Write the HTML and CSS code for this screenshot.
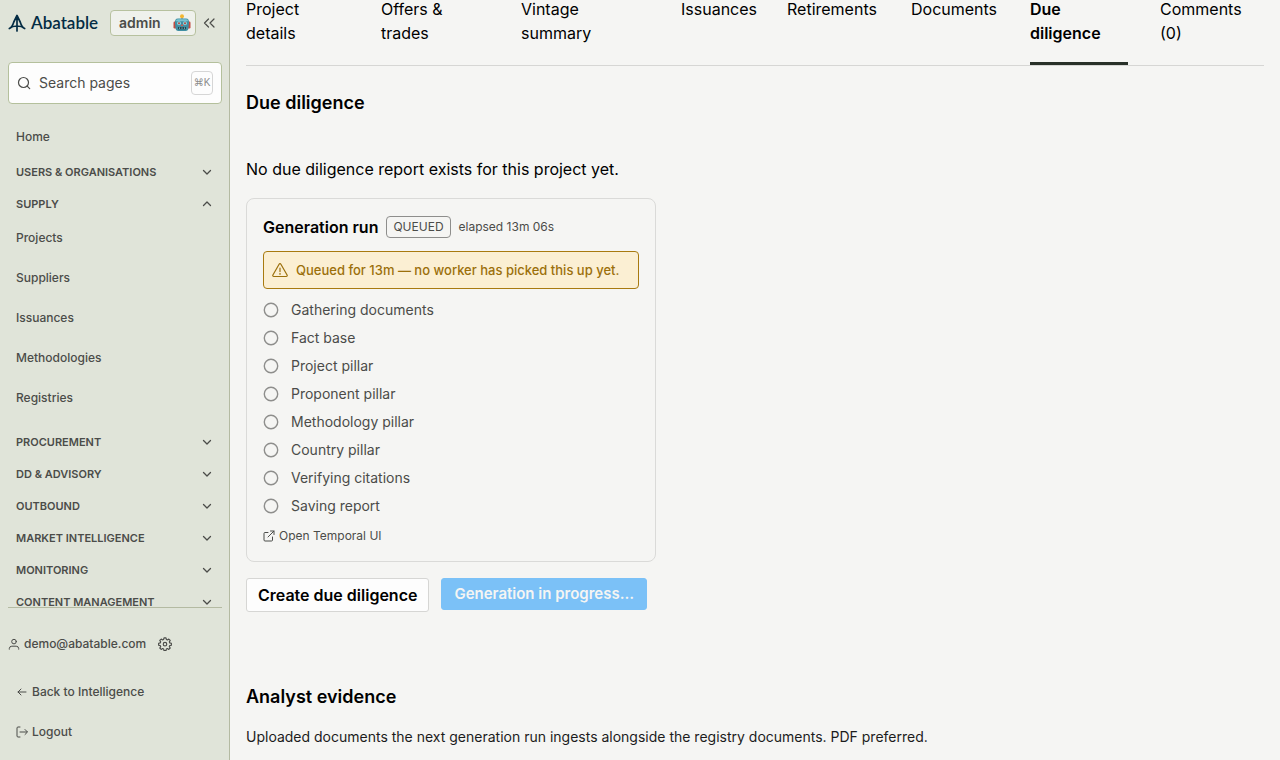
FILE: index.html
```html
<!DOCTYPE html>
<html lang="en">
<head>
    <meta charset="UTF-8">
    <meta name="viewport" content="width=device-width, initial-scale=1.0">
    <title>Due diligence - Abatable admin</title>
    <link rel="stylesheet" href="styles.css">
</head>
<body>
    <!-- icons shared by several rows -->
    <svg class="sprite" aria-hidden="true">
        <symbol id="chevron" viewBox="0 0 12 12"><path d="M2.500 4.500L6 8l3.500-3.500"/></symbol>
        <symbol id="circle" viewBox="0 0 16 16"><circle cx="8" cy="8" r="6.700"/></symbol>
    </svg>

    <aside class="sidebar">
        <div class="brand">
            <svg class="logo-mark" viewBox="0 0 18 18"><path d="M9 1.500V17M1.300 14.500C4 13.500 5.200 10 5.800 8L9 1.500L12.200 8C12.800 10 14 13.500 16.700 14.500M1.500 14.300C5 11.200 13 11.200 16.500 14.300"/></svg>
            <span class="logo-text">Abatable</span>
            <span class="role">admin
                <svg class="robot" viewBox="0 0 18 18"><path fill="#8b9aa0" d="M8.300 2.500h1.400V6H8.300z"/><circle cx="9" cy="2.200" r="2" fill="#f2b632"/><rect x="0.500" y="7.500" width="3" height="7" rx="1.200" fill="#c24a40"/><rect x="14.500" y="7.500" width="3" height="7" rx="1.200" fill="#c24a40"/><path fill="#3f8fa3" d="M5 4.500h8c2.500 0 3.200 2 3 4.500l-.5 5c-.2 2-1 3-3 3h-7c-2 0-2.800-1-3-3L2 9c-.2-2.500.5-4.500 3-4.500z"/><path fill="#79c3d1" d="M5 5.200h8c1.500 0 2 .8 2 2H3c0-1.200.5-2 2-2z"/><circle cx="6" cy="9.300" r="2" fill="#8fd0da"/><circle cx="12" cy="9.300" r="2" fill="#8fd0da"/><circle cx="6" cy="9.300" r="1" fill="#b8483f"/><circle cx="12" cy="9.300" r="1" fill="#b8483f"/><path fill="#e0584a" d="M9 10l1.200 2H7.800z"/><path fill="#24444e" d="M5 13h8v2.300H5z"/><path fill="#79c3d1" d="M6 13.500h1v1.300H6zM8.500 13.500h1v1.300h-1zM11 13.500h1v1.300h-1z"/></svg>
            </span>
            <button class="collapse" type="button" aria-label="Collapse sidebar">
                <svg class="icon" viewBox="0 0 14 14"><path d="M6.500 3L2.500 7l4 4M12 3L8 7l4 4"/></svg>
            </button>
        </div>

        <label class="search">
            <svg class="icon" viewBox="0 0 14 14"><circle cx="6.500" cy="6.500" r="5"/><path d="M10.200 10.200l2.500 2.500"/></svg>
            <input type="text" placeholder="Search pages" aria-label="Search pages">
            <kbd>⌘K</kbd>
        </label>

        <nav class="menu">
            <a class="item home" href="#">Home</a>
            <button class="group" type="button">Users &amp; Organisations <svg class="chev"><use href="#chevron"/></svg></button>
            <button class="group open" type="button">Supply <svg class="chev"><use href="#chevron"/></svg></button>
            <div class="items">
                <a class="item" href="#">Projects</a>
                <a class="item" href="#">Suppliers</a>
                <a class="item" href="#">Issuances</a>
                <a class="item" href="#">Methodologies</a>
                <a class="item" href="#">Registries</a>
            </div>
            <button class="group" type="button">Procurement <svg class="chev"><use href="#chevron"/></svg></button>
            <button class="group" type="button">DD &amp; Advisory <svg class="chev"><use href="#chevron"/></svg></button>
            <button class="group" type="button">Outbound <svg class="chev"><use href="#chevron"/></svg></button>
            <button class="group" type="button">Market Intelligence <svg class="chev"><use href="#chevron"/></svg></button>
            <button class="group" type="button">Monitoring <svg class="chev"><use href="#chevron"/></svg></button>
            <button class="group" type="button">Content Management <svg class="chev"><use href="#chevron"/></svg></button>
        </nav>

        <div class="account">
            <div class="user">
                <svg class="icon small" viewBox="0 0 12 12"><circle cx="6" cy="3.600" r="2.300"/><path d="M1.300 11.200V10.500a2.500 2.500 0 0 1 2.500-2.300h4.400a2.500 2.500 0 0 1 2.500 2.300v.7"/></svg>
                <span>demo@abatable.com</span>
                <button class="settings" type="button" aria-label="Settings">
                    <svg class="icon" viewBox="0 0 24 24"><path stroke-width="2" d="M10.300 1.500h3.400l.6 2.700 1.800.8 2.400-1.500 2.400 2.400-1.500 2.400.8 1.800 2.700.6v3.400l-2.700.6-.8 1.800 1.500 2.400-2.400 2.400-2.400-1.500-1.800.8-.6 2.700h-3.400l-.6-2.700-1.800-.8-2.400 1.500-2.400-2.400 1.500-2.400-.8-1.800-2.700-.6v-3.400l2.700-.6.800-1.800-1.500-2.400 2.400-2.400 2.400 1.500 1.800-.8z"/><circle cx="12" cy="12.300" r="3" stroke-width="2"/></svg>
                </button>
            </div>
            <a class="foot-link" href="#"><svg class="icon small" viewBox="0 0 12 12"><path d="M10 6H2M5 3L2 6l3 3"/></svg>Back to Intelligence</a>
            <a class="foot-link" href="#"><svg class="icon small" viewBox="0 0 12 12"><path d="M4 1H2a1 1 0 0 0-1 1v8a1 1 0 0 0 1 1h2M4 6h7M9 3.500L11.500 6 9 8.500"/></svg>Logout</a>
        </div>
    </aside>

    <main>
        <nav class="tabs">
            <a href="#">Project<br>details</a>
            <a href="#">Offers &amp;<br>trades</a>
            <a href="#">Vintage<br>summary</a>
            <a href="#">Issuances</a>
            <a href="#">Retirements</a>
            <a href="#">Documents</a>
            <a class="active" href="#">Due<br>diligence</a>
            <a href="#">Comments<br>(0)</a>
        </nav>

        <h2>Due diligence</h2>
        <p class="empty">No due diligence report exists for this project yet.</p>

        <section class="run">
            <div class="run-head">
                <h3>Generation run</h3>
                <span class="status">QUEUED</span>
                <span class="elapsed">elapsed 13m 06s</span>
            </div>
            <div class="warning">
                <svg class="icon" viewBox="0 0 16 16"><path d="M8 1.700a1 1 0 0 1 .9.500l6.200 10.800a1 1 0 0 1-.9 1.500H1.800a1 1 0 0 1-.9-1.500L7.100 2.200a1 1 0 0 1 .9-.5zM8 6v3.500M8 11.300v1"/></svg>
                Queued for 13m — no worker has picked this up yet.
            </div>
            <ul class="steps">
                <li><svg><use href="#circle"/></svg>Gathering documents</li>
                <li><svg><use href="#circle"/></svg>Fact base</li>
                <li><svg><use href="#circle"/></svg>Project pillar</li>
                <li><svg><use href="#circle"/></svg>Proponent pillar</li>
                <li><svg><use href="#circle"/></svg>Methodology pillar</li>
                <li><svg><use href="#circle"/></svg>Country pillar</li>
                <li><svg><use href="#circle"/></svg>Verifying citations</li>
                <li><svg><use href="#circle"/></svg>Saving report</li>
            </ul>
            <a class="temporal" href="#"><svg class="icon small" viewBox="0 0 12 12"><path d="M5 2.500H2a1 1 0 0 0-1 1V10a1 1 0 0 0 1 1h6.500a1 1 0 0 0 1-1V7M7.500 1H11v3.500M11 1L5 7"/></svg>Open Temporal UI</a>
        </section>

        <div class="actions">
            <button class="btn" type="button">Create due diligence</button>
            <button class="btn primary" type="button" disabled>Generation in progress…</button>
        </div>

        <h2>Analyst evidence</h2>
        <p class="hint">Uploaded documents the next generation run ingests alongside the registry documents. PDF preferred.</p>
    </main>
</body>
</html>
```
FILE: styles.css
```css
* {
    box-sizing: border-box;
}

body {
    display: flex;
    height: 100vh;
    margin: 0;
    background: #f5f5f3;
    color: #000;
    font-family: Inter, "Liberation Sans", sans-serif;
    font-size: 16px;
    line-height: 24px;
}

a {
    color: inherit;
    text-decoration: none;
}

button, input {
    font: inherit;
    color: inherit;
}

svg {
    flex: none;
    fill: none;
    stroke: currentColor;
    stroke-linecap: round;
    stroke-linejoin: round;
}

.sprite {
    position: absolute;
    width: 0;
    height: 0;
}

.icon {
    width: 14px;
    height: 14px;
    stroke-width: 1.2;
}

.icon.small {
    width: 12px;
    height: 12px;
    stroke-width: 1;
}

/* sidebar */
.sidebar {
    display: flex;
    flex: none;
    flex-direction: column;
    width: 230px;
    padding: 10px 7px 16px 8px;
    background: #e0e4d9;
    border-right: 1px solid #b4baa2;
    color: #4b4c49;
}

.brand {
    display: flex;
    align-items: center;
    height: 26px;
}

.logo-mark {
    width: 18px;
    height: 18px;
    stroke: #042c44;
    stroke-width: 1.7;
}

.logo-text {
    width: 80px;
    padding-left: 5px;
    color: #042c44;
    font-family: Lato, sans-serif;
    font-size: 17px;
    font-weight: 600;
}

.role {
    display: flex;
    align-items: center;
    justify-content: space-between;
    width: 86px;
    height: 26px;
    margin-left: 4px;
    padding: 0 4px 0 8px;
    background: #eff1ec;
    border: 1px solid #b7c19f;
    border-radius: 4px;
    font-size: 14px;
    font-weight: 600;
}

.robot {
    width: 18px;
    height: 18px;
    stroke: none;
}

.collapse, .settings {
    display: flex;
    padding: 0;
    background: none;
    border: 0;
}

.collapse {
    margin-left: 6px;
}

.search {
    display: flex;
    align-items: center;
    height: 42px;
    margin: 26px 0 17px;
    padding: 0 8px;
    background: #fdfdfd;
    border: 1px solid #b4c09c;
    border-radius: 4px;
}

.search input {
    flex: 1;
    min-width: 0;
    margin: 0 8px;
    padding: 0;
    background: none;
    border: 0;
    font-size: 14px;
    outline: 0;
}

.search input::placeholder {
    color: #4b4c49;
    opacity: 1;
}

kbd {
    width: 22px;
    height: 24px;
    border: 1px solid #d6d6d6;
    border-radius: 4px;
    color: #8a8a8a;
    font-family: "Liberation Sans", "DejaVu Sans", sans-serif;
    font-size: 10px;
    line-height: 22px;
    text-align: center;
}

.menu {
    flex: 1;
    min-height: 0;
    overflow: hidden;
}

.item {
    display: block;
    padding: 0 8px;
    font-size: 12px;
    font-weight: 500;
    line-height: 32px;
}

.home {
    margin-bottom: 3px;
}

.items {
    display: grid;
    gap: 8px;
    padding: 2px 0 12px;
}

.group {
    display: flex;
    align-items: center;
    justify-content: space-between;
    width: 100%;
    height: 32px;
    padding: 0 9px 0 8px;
    background: none;
    border: 0;
    font-size: 11px;
    font-weight: 600;
    text-transform: uppercase;
}

.chev {
    width: 12px;
    height: 12px;
    stroke-width: 1.3;
}

.open .chev {
    transform: rotate(180deg);
}

.account {
    display: grid;
    gap: 16px;
    padding-top: 24px;
    border-top: 1px solid #b4baa2;
    font-size: 12px;
    font-weight: 500;
}

.user, .foot-link {
    display: flex;
    align-items: center;
    gap: 4px;
}

.user {
    margin-bottom: 8px;
}

.foot-link {
    padding-left: 8px;
}

.settings {
    margin-left: 8px;
}

/* content */
main {
    flex: 1;
    min-width: 0;
    padding: 0 16px;
    overflow: hidden;
}

/* the list is scrolled a little under the top edge */
.tabs {
    display: grid;
    grid-template-columns: 103fr 108fr 128fr 74fr 92fr 87fr 98fr 104fr;
    gap: 32px;
    margin-top: -3px;
    border-bottom: 1px solid #d6d6d4;
}

.tabs a {
    min-width: 0;
    padding-bottom: 17px;
    border-bottom: 3px solid transparent;
}

.tabs .active {
    border-color: #283028;
    font-weight: 600;
}

h2, h3, p {
    margin: 0;
}

h2 {
    margin-top: 24px;
    font-size: 18px;
    font-weight: 600;
    line-height: 26px;
}

.empty {
    margin: 41px 0 17px;
}

.run {
    width: 410px;
    padding: 16px 16px 13px;
    border: 1px solid #dadad8;
    border-radius: 8px;
    color: #4b4c49;
}

.run-head {
    display: flex;
    align-items: center;
    gap: 8px;
}

h3 {
    color: #000;
    font-size: 16px;
    font-weight: 600;
}

.status {
    height: 22px;
    padding: 0 6px;
    border: 1px solid #8e8e8c;
    border-radius: 4px;
    font-size: 12px;
    line-height: 20px;
}

.elapsed {
    font-size: 12px;
}

.warning {
    display: flex;
    align-items: center;
    gap: 8px;
    height: 38px;
    margin: 12px 0 9px;
    padding: 0 8px;
    background: #fbefd3;
    border: 1px solid #a87a10;
    border-radius: 4px;
    color: #9b6f0b;
    font-size: 13px;
    font-weight: 500;
    white-space: nowrap;
}

.warning .icon {
    width: 16px;
    height: 16px;
}

.steps {
    display: grid;
    gap: 4px;
    margin: 0;
    padding: 0;
    font-size: 14px;
    list-style: none;
}

.steps li {
    display: flex;
    align-items: center;
    gap: 12px;
}

.steps svg {
    width: 16px;
    height: 16px;
    color: #8e8e8c;
    stroke-width: 1.4;
}

.temporal {
    display: flex;
    align-items: center;
    gap: 4px;
    margin-top: 6px;
    font-size: 12px;
}

.actions {
    display: flex;
    gap: 12px;
    margin: 16px 0 72px;
}

.btn {
    height: 34px;
    padding: 0 11px;
    background: #fdfdfd;
    border: 1px solid #d6d6d4;
    border-radius: 3px;
    font-weight: 600;
}

.btn.primary {
    height: 32px;
    padding: 0 12px;
    background: #7bc1f7;
    border-color: #7bc1f7;
    color: #f5f5f3;
    font-size: 15px;
}

.hint {
    margin-top: 15px;
    color: #1c1c1c;
    font-size: 14px;
}
```
